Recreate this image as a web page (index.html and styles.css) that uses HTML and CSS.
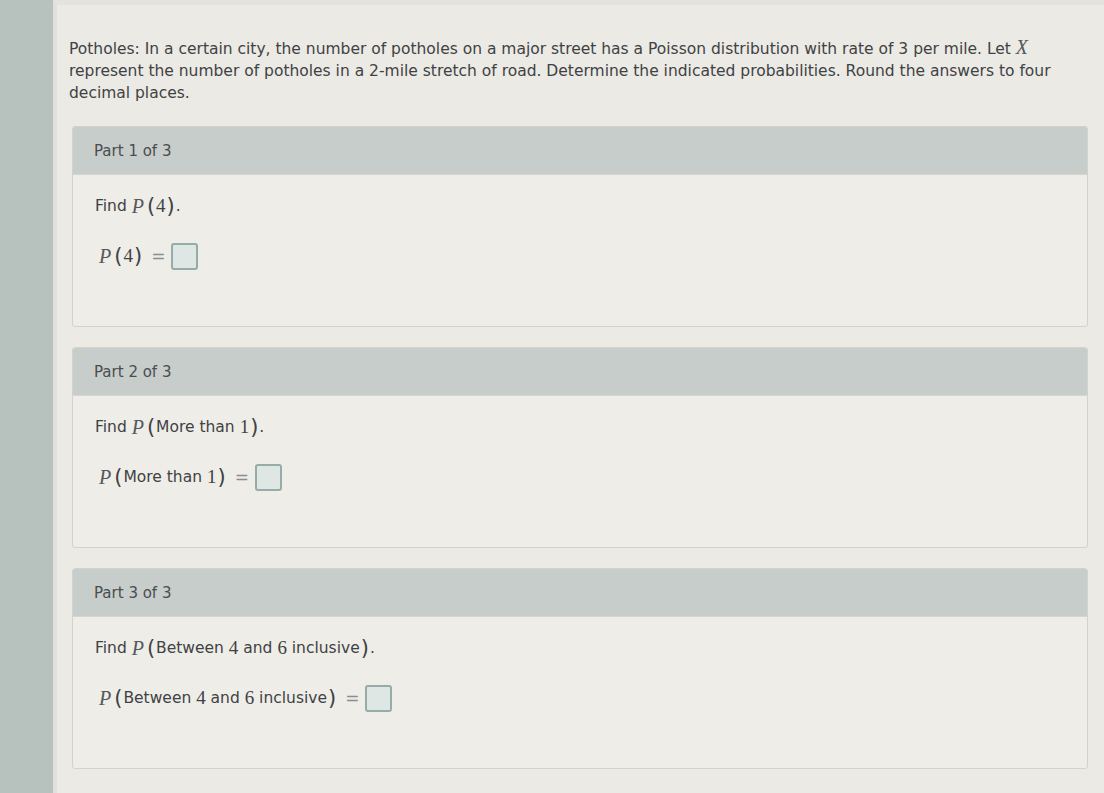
FILE: index.html
```html
<!DOCTYPE html>
<html>
<head>
<meta charset="utf-8">
<link rel="stylesheet" href="styles.css">
</head>
<body>
<div class="page">
  <div class="sidebar"></div>
  <div class="main">
    <p class="intro">Potholes: In a certain city, the number of potholes on a major street has a Poisson distribution with rate of 3 per mile. Let <span class="mv">X</span> represent the number of potholes in a 2-mile stretch of road. Determine the indicated probabilities. Round the answers to four decimal places.</p>

    <section class="part">
      <div class="part-head">Part 1 of 3</div>
      <div class="part-body">
        <div class="q">Find <span class="mv">P</span><span class="mp">(</span><span class="mn">4</span><span class="mp">)</span>.</div>
        <div class="ans"><span class="mv">P</span><span class="mp">(</span><span class="mn">4</span><span class="mp">)</span><span class="eq">=</span><span class="box"></span></div>
      </div>
    </section>

    <section class="part">
      <div class="part-head">Part 2 of 3</div>
      <div class="part-body">
        <div class="q">Find <span class="mv">P</span><span class="mp">(</span>More than <span class="mn">1</span><span class="mp">)</span>.</div>
        <div class="ans"><span class="mv">P</span><span class="mp">(</span>More than <span class="mn">1</span><span class="mp">)</span><span class="eq">=</span><span class="box"></span></div>
      </div>
    </section>

    <section class="part">
      <div class="part-head">Part 3 of 3</div>
      <div class="part-body">
        <div class="q">Find <span class="mv">P</span><span class="mp">(</span>Between <span class="mn">4</span> and <span class="mn">6</span> inclusive<span class="mp">)</span>.</div>
        <div class="ans"><span class="mv">P</span><span class="mp">(</span>Between <span class="mn">4</span> and <span class="mn">6</span> inclusive<span class="mp">)</span><span class="eq">=</span><span class="box"></span></div>
      </div>
    </section>
  </div>
</div>
</body>
</html>
```

FILE: styles.css
```css
html, body {
  margin: 0;
  padding: 0;
  height: 100%;
}
body {
  background: #e9e8e3;
  font-family: "DejaVu Sans", Verdana, sans-serif;
  color: #3f4244;
}
.page {
  display: flex;
  min-height: 793px;
}
.sidebar {
  width: 53px;
  flex: none;
  background: #b7c2be;
}
.main {
  flex: 1;
  border-left: 4px solid #e1e0db;
  border-top: 5px solid #e4e3de;
  padding: 31px 16px 0 12px;
  background: #ebeae5;
}
.intro {
  margin: 0;
  font-size: 15.5px;
  line-height: 22px;
  max-width: 990px;
}
.mv {
  font-family: "Liberation Serif", "Times New Roman", serif;
  font-style: italic;
  font-size: 20px;
  color: #55585a;
  margin-right: 2px;
}
.mn {
  font-family: "Liberation Serif", "Times New Roman", serif;
  font-size: 19px;
}
.mp {
  font-family: "DejaVu Sans", sans-serif;
  font-size: 21px;
  padding: 0 1px;
}
.part {
  margin: 22px 0 20px 3px;
  width: 1014px;
  border: 1px solid #d2d1cc;
  border-radius: 3px;
  background: #eeede8;
  overflow: hidden;
}
.part + .part {
  margin-top: 20px;
}
.part-head {
  height: 47px;
  display: flex;
  align-items: center;
  padding-left: 21px;
  background: #c6cdca;
  border-bottom: 1px solid #d6d6d0;
  font-size: 15px;
  color: #4a4d4f;
}
.part-body {
  height: 151px;
  padding: 17px 0 0 22px;
  box-sizing: border-box;
  font-size: 15.5px;
}
.q {
  height: 28px;
  display: flex;
  align-items: center;
  white-space: pre;
}
.ans {
  margin-top: 22px;
  height: 28px;
  display: flex;
  align-items: center;
  padding-left: 4px;
  white-space: pre;
}
.eq {
  color: #8b8e90;
  font-size: 17px;
  padding: 0 6px 0 8px;
}
.box {
  display: inline-block;
  width: 23px;
  height: 23px;
  border: 2px solid #95aca8;
  border-radius: 3px;
  background: #dfe7e5;
}
```
